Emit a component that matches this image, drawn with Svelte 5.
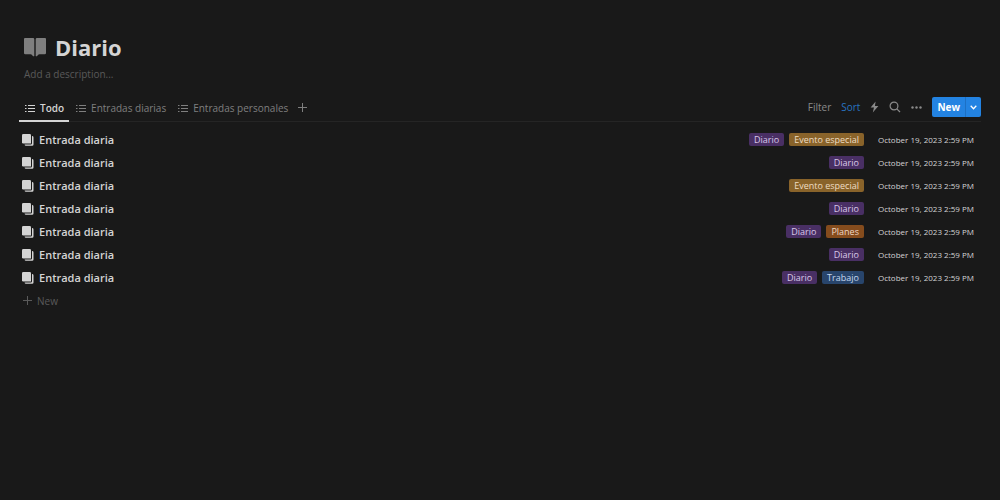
<script lang="ts">
	type Tag = 'Diario' | 'Evento especial' | 'Planes' | 'Trabajo';

	type Entry = {
		title: string;
		tags: Tag[];
		date: string;
	};

	const tagColors: Record<Tag, string> = {
		Diario: 'purple',
		'Evento especial': 'yellow',
		Planes: 'orange',
		Trabajo: 'blue'
	};

	const views = ['Todo', 'Entradas diarias', 'Entradas personales'];

	const tagsByEntry: Tag[][] = [
		['Diario', 'Evento especial'],
		['Diario'],
		['Evento especial'],
		['Diario'],
		['Diario', 'Planes'],
		['Diario'],
		['Diario', 'Trabajo']
	];

	let entries: Entry[] = $state(tagsByEntry.map((tags) => newEntry(tags)));
	let activeView = $state('Todo');

	function newEntry(tags: Tag[]): Entry {
		return { title: 'Entrada diaria', tags, date: 'October 19, 2023 2:59 PM' };
	}

	function addEntry() {
		entries.push(newEntry(['Diario']));
	}
</script>

<svelte:head>
	<title>Diario</title>
</svelte:head>

<main class="page">
	<header>
		<div class="heading">
			<svg class="book" viewBox="0 0 22 20" aria-hidden="true">
				<path
					d="M0 2Q0 1 1 1H9Q10.300 1 10.300 2.300V19Q9.500 19.800 8.600 18.800C7.900 17.400 7 17.200 5.500 17.200H1.200Q0 17.200 0 16Z"
				/>
				<path
					d="M22 2Q22 1 21 1H13Q11.700 1 11.700 2.300V19Q12.500 19.800 13.400 18.800C14.100 17.400 15 17.200 16.500 17.200H20.800Q22 17.200 22 16Z"
				/>
			</svg>
			<h1>Diario</h1>
		</div>
		<p class="description">Add a description...</p>
	</header>

	<div class="toolbar">
		<nav class="views">
			{#each views as view}
				<button class="view" class:active={view === activeView} onclick={() => (activeView = view)}>
					<svg class="list-icon" viewBox="0 0 10 9" aria-hidden="true">
						<path d="M0 1.500h1.500M0 4.500h1.500M0 7.500h1.500M3 1.500h7M3 4.500h7M3 7.500h7" />
					</svg>
					<span>{view}</span>
				</button>
			{/each}
			<button class="add-view" aria-label="Add view">
				<svg class="plus" viewBox="0 0 9 9" aria-hidden="true"><path d="M4.500 0v9M0 4.500h9" /></svg>
			</button>
		</nav>

		<div class="actions">
			<button class="action">Filter</button>
			<button class="action sorted">Sort</button>
			<button class="action" aria-label="Automations">
				<svg width="9" height="12" viewBox="0 0 9 12" aria-hidden="true">
					<path d="M5.600.500.600 6.600H4L2.800 11.500 8.400 5H4.900Z" />
				</svg>
			</button>
			<button class="action" aria-label="Search">
				<svg width="12" height="12" viewBox="0 0 12 12" aria-hidden="true">
					<circle class="line" cx="5" cy="5" r="3.900" />
					<path class="line" d="m7.800 7.800 3.200 3.200" />
				</svg>
			</button>
			<button class="action" aria-label="More">
				<svg width="11" height="3" viewBox="0 0 11 3" aria-hidden="true">
					<circle cx="1.500" cy="1.500" r="1.200" />
					<circle cx="5.500" cy="1.500" r="1.200" />
					<circle cx="9.500" cy="1.500" r="1.200" />
				</svg>
			</button>
			<div class="new-group">
				<button class="new" onclick={addEntry}>New</button>
				<button class="new-menu" aria-label="New from template">
					<svg width="7" height="5" viewBox="0 0 7 5" aria-hidden="true">
						<path d="m.7.800 2.800 2.900L6.300.800" />
					</svg>
				</button>
			</div>
		</div>
	</div>

	<ul class="entries">
		{#each entries as entry}
			<li class="entry">
				<svg class="pages" viewBox="0 0 12 12" aria-hidden="true">
					<path d="M1.300 0H7.700Q9 0 9 1.300V9.500H1.300Q0 9.500 0 8.200V1.300Q0 0 1.300 0Z" />
					<path
						d="M10 2Q11.500 2 11.500 3.400V10.400Q11.500 11.800 10.100 11.800H4Q2.600 11.800 2.600 10.500H8.800Q10 10.500 10 9.300Z"
					/>
				</svg>
				<span class="title">{entry.title}</span>
				<div class="tags">
					{#each entry.tags as tag}
						<span class="tag {tagColors[tag]}">{tag}</span>
					{/each}
				</div>
				<time>{entry.date}</time>
			</li>
		{/each}
	</ul>

	<button class="new-row" onclick={addEntry}>
		<svg class="plus" viewBox="0 0 9 9" aria-hidden="true"><path d="M4.500 0v9M0 4.500h9" /></svg>
		New
	</button>
</main>

<style>
	:global(body) {
		margin: 0;
		background: #191919;
	}

	.page {
		padding: 32px 19px 24px;
		color: #d4d4d4;
		font-family: 'Segoe UI', 'Open Sans', sans-serif;
		font-size: 10px;
	}

	button {
		display: flex;
		align-items: center;
		padding: 0;
		border: 0;
		background: none;
		color: inherit;
		font: inherit;
		cursor: pointer;
	}

	svg {
		flex: none;
		fill: currentColor;
	}

	header {
		padding-left: 5px;
	}

	.heading {
		display: flex;
		align-items: center;
		gap: 9px;
	}

	.book {
		width: 22px;
		height: 20px;
		color: #7f7f7f;
	}

	h1 {
		margin: 0;
		font-size: 22px;
		line-height: 30px;
		font-weight: 700;
	}

	.description {
		margin: 0;
		padding-top: 2px;
		line-height: 20px;
		color: #5a5a5a;
	}

	.toolbar {
		display: flex;
		justify-content: space-between;
		margin-top: 10px;
		border-bottom: 1px solid #252525;
	}

	.views {
		display: flex;
		gap: 1px;
		margin-bottom: -1px;
	}

	.view {
		gap: 5px;
		height: 28px;
		padding: 2px 5px 0 6px;
		border-bottom: 2px solid transparent;
		color: #7f7f7f;
		font-weight: 500;
	}

	.view.active {
		border-color: #d4d4d4;
		color: #d4d4d4;
		font-weight: 600;
	}

	.list-icon {
		width: 10px;
		height: 9px;
		stroke: currentColor;
	}

	.plus {
		width: 9px;
		height: 9px;
		stroke: currentColor;
	}

	.add-view {
		height: 26px;
		padding: 0 4px;
		color: #7f7f7f;
	}

	.actions {
		display: flex;
		align-items: center;
		gap: 10px;
		height: 26px;
	}

	.action {
		color: #8a8a8a;
	}

	.action.sorted {
		color: #2873c0;
	}

	.line {
		fill: none;
		stroke: currentColor;
		stroke-width: 1.2;
	}

	.new-group {
		display: flex;
		height: 20px;
		border-radius: 2px;
		background: #2383e2;
		color: #fff;
	}

	.new {
		padding: 0 5px;
		border-right: 1px solid #1d70c4;
		font-weight: 700;
	}

	.new-menu {
		padding: 0 4px;
	}

	.new-menu path {
		fill: none;
		stroke: currentColor;
		stroke-width: 1.3;
	}

	.entries {
		margin: 0;
		padding: 6px 7px 0 3px;
		list-style: none;
	}

	.entry {
		display: flex;
		align-items: center;
		height: 23px;
	}

	.pages {
		width: 12px;
		height: 12px;
	}

	.title {
		flex: 1;
		padding-left: 5px;
		font-size: 11px;
		font-weight: 600;
	}

	.tags {
		display: flex;
		gap: 5px;
	}

	.tag {
		padding: 0 5px;
		border-radius: 2px;
		font-size: 9px;
		line-height: 13px;
	}

	.purple {
		background: #492f64;
		color: #d9c8e8;
	}

	.yellow {
		background: #89632a;
		color: #eeddc4;
	}

	.orange {
		background: #854c1d;
		color: #efd8c5;
	}

	.blue {
		background: #28456c;
		color: #c4d8ee;
	}

	time {
		padding-left: 14px;
		font-size: 8px;
	}

	.new-row {
		gap: 5px;
		height: 23px;
		padding-left: 4px;
		color: #5a5a5a;
	}
</style>
